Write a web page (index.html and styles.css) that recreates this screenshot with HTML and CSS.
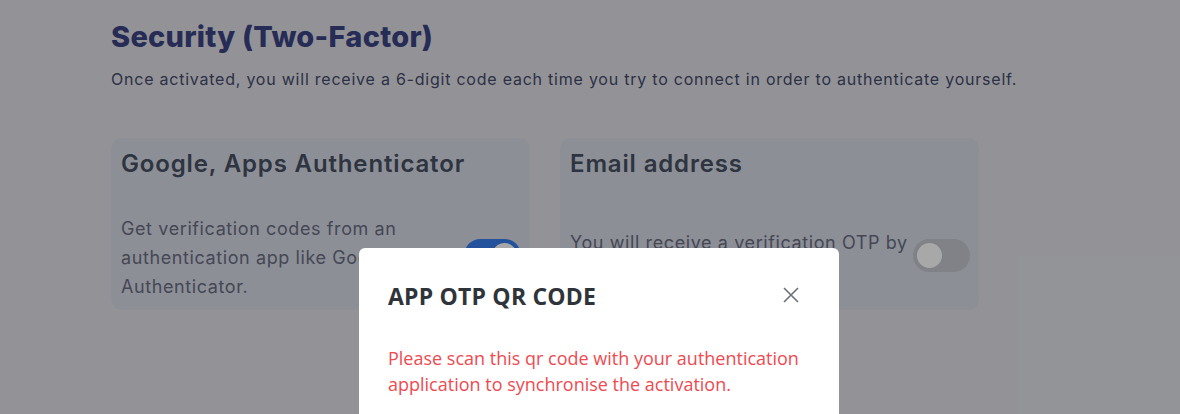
FILE: index.html
```html
<!DOCTYPE html>
<html lang="en">
<head>
<meta charset="utf-8">
<title>Security (Two-Factor)</title>
<link rel="stylesheet" href="styles.css">
</head>
<body>
<main class="page">
  <h1 class="page-title">Security (Two-Factor)</h1>
  <p class="page-lead">Once activated, you will receive a 6-digit code each time you try to connect in order to authenticate yourself.</p>
  <div class="cards">
    <section class="card">
      <h2 class="card-title">Google, Apps Authenticator</h2>
      <div class="card-row">
        <p class="card-text">Get verification codes from an authentication app like Google Authenticator.</p>
        <span class="switch on"><span class="knob"></span></span>
      </div>
    </section>
    <section class="card">
      <h2 class="card-title">Email address</h2>
      <div class="card-row">
        <p class="card-text">You will receive a verification OTP by email.</p>
        <span class="switch"><span class="knob"></span></span>
      </div>
    </section>
  </div>
</main>
<div class="backdrop"></div>
<div class="modal-wrap">
  <div class="modal">
    <div class="modal-header">
      <h3 class="modal-title">APP OTP QR CODE</h3>
      <button class="close" aria-label="Close">
        <svg width="16" height="16" viewBox="0 0 16 16"><path d="M1 1L15 15M15 1L1 15" stroke="#6c7078" stroke-width="1.6" fill="none"/></svg>
      </button>
    </div>
    <div class="modal-body">
      <p class="modal-note">Please scan this qr code with your authentication application to synchronise the activation.</p>
    </div>
  </div>
</div>
</body>
</html>
```
FILE: styles.css
```css
html, body {
  margin: 0;
  padding: 0;
}
body {
  width: 1180px;
  height: 414px;
  overflow: hidden;
  background: #dfe0e6;
  font-family: Inter, "DejaVu Sans", sans-serif;
  position: relative;
}
.page {
  padding: 20px 0 0 111px;
}
.page-title {
  margin: 0;
  font-size: 29px;
  font-weight: 800;
  line-height: 34px;
  color: #3a4481;
  letter-spacing: 0.25px;
}
.page-lead {
  margin: 14px 0 0;
  font-size: 16px;
  line-height: 22px;
  color: #44496a;
  letter-spacing: 0.77px;
}
.cards {
  display: flex;
  gap: 30px;
  margin-top: 48px;
}
.card {
  width: 419px;
  height: 172px;
  box-sizing: border-box;
  padding: 10px;
  background: #d6dae6;
  border-radius: 10px;
  display: flex;
  flex-direction: column;
}
.card-title {
  margin: 0;
  font-size: 24px;
  font-weight: 600;
  line-height: 32px;
  color: #464f61;
  letter-spacing: 0.85px;
}
.card-row {
  flex: 1;
  display: flex;
  align-items: center;
  justify-content: space-between;
  padding-top: 34px;
}
.card-text {
  margin: 0;
  width: 345px;
  font-size: 18px;
  line-height: 29px;
  color: #6a6d81;
  letter-spacing: 0.6px;
}
.switch {
  width: 57px;
  height: 33px;
  border-radius: 17px;
  background: #c2c5cd;
  display: flex;
  align-items: center;
  padding: 0 4px;
  box-sizing: border-box;
  flex-shrink: 0;
  margin-top: -4px;
  margin-right: -1px;
}
.switch .knob {
  width: 25px;
  height: 25px;
  border-radius: 50%;
  background: #ffffff;
}
.switch.on {
  background: #377ceb;
  justify-content: flex-end;
}
.backdrop {
  position: absolute;
  inset: 0;
  background: rgba(0, 0, 0, 0.34);
}
.modal-wrap {
  position: absolute;
  inset: 0;
  display: flex;
  justify-content: center;
  padding-top: 248px;
}
.modal {
  width: 480px;
  height: 166px;
  background: #ffffff;
  border-radius: 6px 6px 0 0;
  font-family: "Open Sans", "Noto Sans", sans-serif;
  margin-left: 18px;
}
.modal-header {
  display: flex;
  align-items: center;
  justify-content: space-between;
  padding: 33px 40px 0 29px;
}
.modal-title {
  margin: 0;
  font-size: 23px;
  font-weight: 700;
  line-height: 30px;
  color: #2f343a;
  letter-spacing: 0.2px;
}
.close {
  border: 0;
  background: none;
  padding: 0;
  width: 16px;
  height: 16px;
  display: flex;
  margin-top: -3px;
}
.modal-body {
  padding: 34px 29px 0;
}
.modal-note {
  margin: 0;
  font-size: 18px;
  line-height: 26px;
  color: #f04a50;
}
```
